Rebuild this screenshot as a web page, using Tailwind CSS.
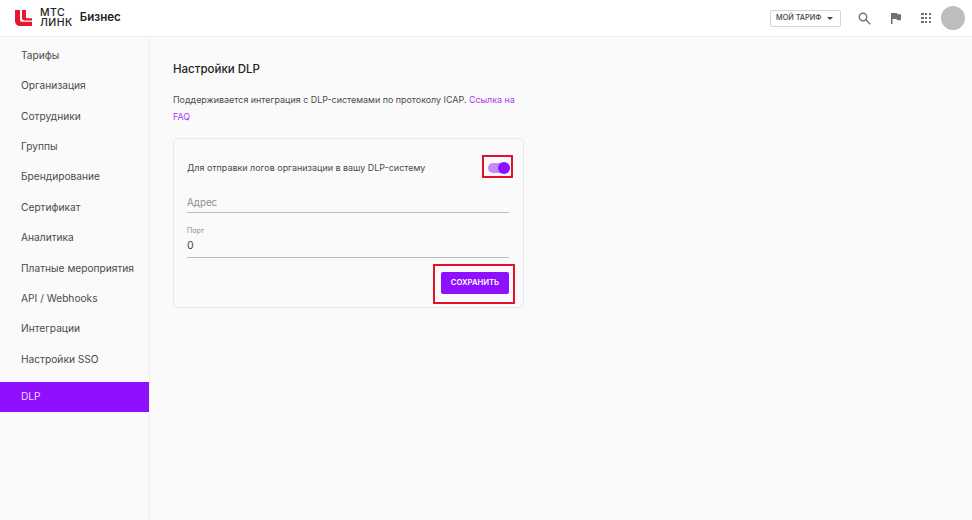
<!DOCTYPE html>
<html lang="ru"><head><meta charset="utf-8">
<script src="https://cdn.jsdelivr.net/npm/@tailwindcss/browser@4"></script>
</head>
<body class="w-[972px] h-[520px] overflow-hidden bg-[#fafafa] font-['Inter','Liberation_Sans',sans-serif] text-[#3c3c3c]">
<header class="h-[36px] bg-white border-b border-[#efefef] flex items-center pl-[15px] pr-[7px] box-content">
  <svg class="w-[17px] h-[16px] shrink-0" viewBox="0 0 17 16"><path fill="#e6162d" d="M0 0h5v9.500c0 1.500.8 2.300 2.300 2.300H17V16H5.500C2 16 0 14 0 10.500z M7 0h4v7c0 .8.400 1.200 1.200 1.200H17v2.300H9.500C8 10.500 7 9.500 7 8z"/></svg>
  <div class="ml-[8px] text-[10.500px] leading-[10px] font-medium text-[#222] tracking-[.5px]">МТС<br>ЛИНК</div>
  <div class="ml-[7px] text-[11.500px] font-semibold text-[#222]">Бизнес</div>
  <div class="ml-auto flex items-center">
    <div class="w-[71px] h-[17px] shrink-0 whitespace-nowrap bg-white border border-[#d4d4d4] rounded-[2px] flex items-center pl-[5px] text-[7.300px] font-medium text-[#444]">МОЙ ТАРИФ
      <span class="ml-[6px] w-0 h-0 border-l-[3px] border-r-[3px] border-t-[3px] border-l-transparent border-r-transparent border-t-[#444]"></span></div>
    <svg class="ml-[17px] w-[13px] h-[13px]" viewBox="0 0 13 13" fill="none" stroke="#757575" stroke-width="1.500"><circle cx="5" cy="5" r="3.700"/><path d="M7.800 7.800 12.300 12.300"/></svg>
    <svg class="ml-[20px] w-[10px] h-[11px]" viewBox="0 0 10 11"><path fill="#707070" d="M0 0h6l.4 1.200H10v6H6l-.4-1.200H1.500V11H0z"/></svg>
    <div class="ml-[20px] grid grid-cols-3 gap-[1.500px] w-[10px]">
      <i class="w-[2.500px] h-[2.500px] bg-[#707070]"></i><i class="w-[2.500px] h-[2.500px] bg-[#707070]"></i><i class="w-[2.500px] h-[2.500px] bg-[#707070]"></i>
      <i class="w-[2.500px] h-[2.500px] bg-[#707070]"></i><i class="w-[2.500px] h-[2.500px] bg-[#707070]"></i><i class="w-[2.500px] h-[2.500px] bg-[#707070]"></i>
      <i class="w-[2.500px] h-[2.500px] bg-[#707070]"></i><i class="w-[2.500px] h-[2.500px] bg-[#707070]"></i><i class="w-[2.500px] h-[2.500px] bg-[#707070]"></i>
    </div>
    <div class="ml-[10px] w-[24px] h-[24px] rounded-full bg-[#bdbdbd]"></div>
  </div>
</header>
<div class="flex h-[483px]">
  <nav class="w-[150px] shrink-0 border-r border-[#efefef] pt-[3.300px] text-[10.200px] text-[#4a4a4a]">
    <div class="h-[30.400px] flex items-center pl-[21px]">Тарифы</div>
    <div class="h-[30.400px] flex items-center pl-[21px]">Организация</div>
    <div class="h-[30.400px] flex items-center pl-[21px]">Сотрудники</div>
    <div class="h-[30.400px] flex items-center pl-[21px]">Группы</div>
    <div class="h-[30.400px] flex items-center pl-[21px]">Брендирование</div>
    <div class="h-[30.400px] flex items-center pl-[21px]">Сертификат</div>
    <div class="h-[30.400px] flex items-center pl-[21px]">Аналитика</div>
    <div class="h-[30.400px] flex items-center pl-[21px]">Платные мероприятия</div>
    <div class="h-[30.400px] flex items-center pl-[21px]">API / Webhooks</div>
    <div class="h-[30.400px] flex items-center pl-[21px]">Интеграции</div>
    <div class="h-[30.400px] flex items-center pl-[21px]">Настройки SSO</div>
    <div class="mt-[7px] h-[30px] flex items-center pl-[21px] bg-[#8f0fff] text-[#f3dcff]">DLP</div>
  </nav>
  <main class="pl-[23px] pt-[24px] w-[374px]">
    <h1 class="text-[11.500px] leading-[16px] font-medium text-[#222]">Настройки DLP</h1>
    <p class="mt-[15px] text-[8.920px] leading-[16.500px] text-[#4a4a4a]">Поддерживается интеграция с DLP-системами по протоколу ICAP. <span class="text-[#a839f5]">Ссылка на FAQ</span></p>
    <section class="mt-[13px] w-[351px] h-[170px] border border-[#e8e8e8] rounded-[5px] pl-[13px] pr-[14px]">
      <div class="h-[58px] flex items-center justify-between">
        <span class="text-[8.950px] text-[#4a4a4a]">Для отправки логов организации в вашу DLP-систему</span>
        <div class="relative w-[22px] h-[10px] mr-[-1px] rounded-full bg-[#c58bf5]">
          <div class="absolute right-0 top-[-1px] w-[12px] h-[12px] rounded-full bg-[#8f0fff]"></div>
          <div class="absolute left-[-6px] top-[-8px] w-[31px] h-[23px] border-2 border-[#e3122a]"></div>
        </div>
      </div>
      <div class="h-[15px] text-[9.800px] leading-[12px] text-[#8d8d8d]">Адрес</div>
      <div class="border-b border-[#bdbdbd]"></div>
      <div class="mt-[13px] text-[7px] leading-[10px] text-[#8d8d8d]">Порт</div>
      <div class="mt-[3px] text-[10.500px] leading-[13px] text-[#444]">0</div>
      <div class="mt-[5px] border-b border-[#bdbdbd]"></div>
      <div class="mt-[14px] flex justify-end">
        <button class="relative w-[68px] h-[22px] rounded-[2px] bg-[#8f0fff] text-white text-[7.700px] font-semibold">СОХРАНИТЬ
          <span class="absolute left-[-8px] top-[-8px] w-[82px] h-[40px] border-2 border-[#e3122a]"></span>
        </button>
      </div>
    </section>
  </main>
</div>
</body></html>
